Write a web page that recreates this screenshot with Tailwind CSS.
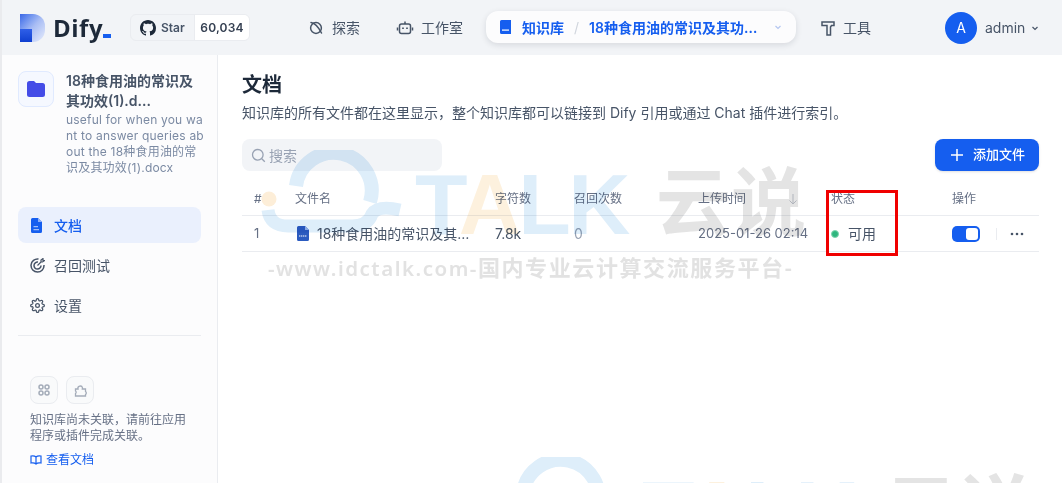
<!DOCTYPE html>
<html lang="zh-CN">
<head>
<meta charset="utf-8"/>
<title>Dify 文档</title>
<script src="https://cdn.jsdelivr.net/npm/@tailwindcss/browser@4"></script>
</head>
<body class="w-[1062px] h-[483px] overflow-hidden bg-white font-['Inter','Noto_Sans_CJK_SC',sans-serif] text-[#354052]">
<div class="relative w-full h-full flex flex-col border-l-2 border-[#eaebee]">

  <!-- top bar -->
  <header class="h-[55px] shrink-0 bg-[#f2f4f7] flex items-center relative">
    <div class="ml-[18px] w-[25px] h-[28px] rounded-r-[12px] bg-gradient-to-br from-[#3b66e6] via-[#a9bdf4] to-[#e8edfb] relative overflow-hidden">
      <div class="absolute left-0 bottom-0 w-[12px] h-[13px] bg-gradient-to-b from-[#2f5fe8] to-[#0f3fd0]"></div>
    </div>
    <span class="ml-[8px] w-[49px] text-[24px] leading-none font-bold tracking-[.5px] text-[#1d2939] font-['Open_Sans','Inter',sans-serif]">Dify</span>
    <span class="w-[8px] h-[4px] bg-[#155eef] self-end mb-[17px] ml-[1px]"></span>

    <div class="ml-[19px] h-[27px] w-[120px] flex rounded-md border border-[#eaecf0] overflow-hidden text-[12px] font-semibold">
      <div class="w-[63px] flex items-center gap-[5px] pl-[9px] text-[#475467]">
        <svg class="w-[16px] h-[16px] shrink-0" viewBox="0 0 16 16" fill="#1d2939"><path d="M8 0C3.58 0 0 3.58 0 8c0 3.54 2.29 6.53 5.47 7.59.4.07.55-.17.55-.38 0-.19-.01-.82-.01-1.49-2.01.37-2.53-.49-2.69-.94-.09-.23-.48-.94-.82-1.13-.28-.15-.68-.52-.01-.53.63-.01 1.08.58 1.23.82.72 1.21 1.87.87 2.33.66.07-.52.28-.87.51-1.07-1.78-.2-3.64-.89-3.64-3.95 0-.87.31-1.59.82-2.15-.08-.2-.36-1.02.08-2.12 0 0 .67-.21 2.2.82.64-.18 1.32-.27 2-.27s1.36.09 2 .27c1.53-1.04 2.2-.82 2.2-.82.44 1.1.16 1.92.08 2.12.51.56.82 1.27.82 2.15 0 3.07-1.87 3.75-3.65 3.95.29.25.54.73.54 1.48 0 1.07-.01 1.93-.01 2.2 0 .21.15.46.55.38A8.01 8.01 0 0 0 16 8c0-4.42-3.58-8-8-8z"/></svg>
        <span>Star</span>
      </div>
      <div class="flex-1 bg-white flex items-center justify-center border-l border-[#eaecf0] text-[#354052] tracking-[.2px]">60,034</div>
    </div>

    <nav class="absolute inset-y-0 left-[306px] flex items-center text-[14px] text-[#475467]">
      <div class="flex items-center gap-[8px] w-[88px]">
        <svg class="w-[16px] h-[16px]" viewBox="0 0 16 16" fill="none" stroke="#475467" stroke-width="1.5"><circle cx="8" cy="8" r="5.4"/><path d="M3 2.5c3 .5 7 3.500 10.500 10.500" stroke-linecap="round"/></svg>
        <span>探索</span>
      </div>
      <div class="flex items-center gap-[7px]">
        <svg class="w-[18px] h-[18px]" viewBox="0 0 18 18" fill="none" stroke="#475467" stroke-width="1.5"><rect x="3.500" y="5" width="11" height="9.500" rx="2"/><path d="M9 5V2.500M1.500 8.500v3M16.500 8.500v3"/><path d="M7 8.500v1.500M11 8.500v1.500" stroke-width="1.700"/></svg>
        <span>工作室</span>
      </div>
    </nav>

    <div class="absolute left-[484px] top-[11px] w-[310px] h-[32px] rounded-xl bg-[#fcfcfd] shadow-[0_2px_6px_rgba(16,24,40,0.12)] flex items-center pl-[14px] text-[14px] font-semibold text-[#155eef]">
      <svg class="w-[11px] h-[14px] shrink-0" viewBox="0 0 11 14"><path fill="#155eef" d="M1.500 0H11v14H1.500A1.500 1.500 0 0 1 0 12.500v-11A1.500 1.500 0 0 1 1.500 0z"/><rect x="2" y="9.500" width="7" height="1.200" fill="#fff"/></svg>
      <span class="ml-[11px]">知识库</span>
      <span class="mx-[10px] text-[#d0d5dd] font-normal">/</span>
      <span class="w-[170px] truncate">18种食用油的常识及其功效(1).docx</span>
      <svg class="ml-[14px] w-[10px] h-[10px]" viewBox="0 0 10 10" fill="none" stroke="#b4c6f0" stroke-width="1.200"><path d="M2.500 4l2.500 2.500L7.500 4"/></svg>
    </div>

    <div class="absolute left-[818px] inset-y-0 flex items-center gap-[7px] text-[14px] text-[#475467]">
      <svg class="w-[16px] h-[18px]" viewBox="0 0 16 18" fill="none" stroke="#475467" stroke-width="1.500"><path d="M2 3h12v3.500h-2.500l-1 1.500v8H7V6.500H2z"/></svg>
      <span>工具</span>
    </div>

    <div class="absolute left-[943px] inset-y-0 flex items-center">
      <div class="w-[32px] h-[32px] rounded-full bg-[#155eef] text-white text-[14px] flex items-center justify-center">A</div>
      <span class="ml-[8px] text-[14px] text-[#475467]">admin</span>
      <svg class="ml-[5px] w-[10px] h-[10px]" viewBox="0 0 10 10" fill="none" stroke="#475467" stroke-width="1.200"><path d="M2.500 4l2.500 2.500L7.500 4"/></svg>
    </div>
  </header>

  <div class="flex-1 flex min-h-0">
    <!-- sidebar -->
    <aside class="w-[216px] shrink-0 bg-[#fcfcfd] border-r border-[#eaecf0] flex flex-col pl-[16px] pr-[16px] pt-[16px]">
      <div class="flex gap-[12px]">
        <div class="w-[36px] h-[36px] shrink-0 rounded-lg bg-[#f5f8ff] border border-[#e0eaff] flex items-center justify-center">
          <svg class="w-[18px] h-[16px]" viewBox="0 0 18 16"><path fill="#444ce7" d="M2.500 0H7l2 2h6.500A2.500 2.500 0 0 1 18 4.500v9a2.500 2.500 0 0 1-2.500 2.500h-13A2.500 2.500 0 0 1 0 13.500v-11A2.500 2.500 0 0 1 2.500 0z"/></svg>
        </div>
        <div class="w-[136px]">
          <div class="text-[14px] leading-[20px] font-semibold text-[#475467]">18种食用油的常识及<br/>其功效(1).d...</div>
          <div class="mt-[1px] text-[12px] leading-[16px] tracking-[.2px] text-[#7b8aa3] whitespace-nowrap">useful for when you wa<br/>nt to answer queries ab<br/>out the 18种食用油的常<br/>识及其功效(1).docx</div>
        </div>
      </div>

      <nav class="mt-[31px] flex flex-col gap-[4px] text-[14px]">
        <div class="h-[36px] rounded-lg bg-[#eaf0fd] flex items-center pl-[12px] gap-[10px] text-[#155eef] font-medium">
          <svg class="w-[14px] h-[15px] shrink-0" viewBox="0 0 14 15"><path fill="#155eef" d="M2.500 0H8l4 4v9.500a1.500 1.500 0 0 1-1.500 1.500h-8A1.500 1.500 0 0 1 1 13.500v-12A1.500 1.500 0 0 1 2.500 0z"/><path fill="#fff" fill-opacity=".6" d="M3.500 8h4.500v1.300H3.500zM3.500 11h5.500v1.300H3.500z"/><path fill="#8fb0f8" d="M8 0l4 4H8z"/></svg>
          <span>文档</span>
        </div>
        <div class="h-[36px] flex items-center pl-[12px] gap-[9px] text-[#475467]">
          <svg class="w-[15px] h-[15px] shrink-0" viewBox="0 0 15 15" fill="none" stroke="#475467" stroke-width="1.500"><path d="M8.500 1.100A6.500 6.500 0 1 0 14 7"/><path d="M8 4.100A3.500 3.500 0 1 0 11 7.500"/><path d="M7.500 7.500L11 4M11 4V2l2-1.500V2.500h1.500L12.500 4z" stroke-width="1.200"/></svg>
          <span>召回测试</span>
        </div>
        <div class="h-[36px] flex items-center pl-[12px] gap-[9px] text-[#475467]">
          <svg class="w-[15px] h-[15px] shrink-0" viewBox="0 0 24 24" fill="none" stroke="#475467" stroke-width="2"><circle cx="12" cy="12" r="3"/><path d="M19.400 15a1.650 1.650 0 0 0 .33 1.820l.06.06a2 2 0 1 1-2.830 2.830l-.06-.06a1.650 1.650 0 0 0-2.820 1.170V21a2 2 0 1 1-4 0v-.09A1.650 1.650 0 0 0 7.260 19.740l-.06.06a2 2 0 1 1-2.830-2.830l.06-.06A1.650 1.650 0 0 0 3.260 14H3a2 2 0 1 1 0-4h.09A1.650 1.650 0 0 0 4.260 7.260l-.06-.06a2 2 0 1 1 2.830-2.830l.06.06A1.650 1.650 0 0 0 10 3.260V3a2 2 0 1 1 4 0v.09a1.650 1.650 0 0 0 2.820 1.170l.06-.06a2 2 0 1 1 2.830 2.830l-.06.06A1.650 1.650 0 0 0 20.740 10H21a2 2 0 1 1 0 4h-.09A1.650 1.650 0 0 0 19.400 15z"/></svg>
          <span>设置</span>
        </div>
      </nav>
      <div class="h-px bg-[#eaecf0] mt-[12px]"></div>

      <div class="mt-[40px] pl-[12px] pr-[4px]">
        <div class="flex gap-[8px]">
          <div class="w-[28px] h-[28px] rounded-lg bg-[#f9fafb] border border-[#eaecf0] flex items-center justify-center">
            <svg class="w-[12px] h-[12px]" viewBox="0 0 12 12" fill="none" stroke="#a4acb9" stroke-width="1.500"><circle cx="3" cy="3" r="2"/><circle cx="9" cy="3" r="2"/><circle cx="3" cy="9" r="2"/><circle cx="9" cy="9" r="2"/></svg>
          </div>
          <div class="w-[28px] h-[28px] rounded-lg bg-[#f9fafb] border border-[#eaecf0] flex items-center justify-center">
            <svg class="w-[13px] h-[13px]" viewBox="0 0 13 13" fill="none" stroke="#a4acb9" stroke-width="1.300"><path d="M1.500 5H4a2.300 2.300 0 0 1 4.500-1.200L8.300 5h3.200v2.500a1.800 1.800 0 0 1 0 3V12h-10V9.500a1.500 1.500 0 0 0 0-2.500z"/></svg>
          </div>
        </div>
        <p class="mt-[8px] text-[12px] leading-[16px] text-[#667085]">知识库尚未关联，请前往应用程序或插件完成关联。</p>
        <div class="mt-[8px] flex items-center gap-[4px] text-[12px] leading-[16px] text-[#155eef]">
          <svg class="w-[12px] h-[12px]" viewBox="0 0 12 12" fill="none" stroke="#155eef" stroke-width="1.200"><path d="M6 3C5 2 3 1.700 1 2v7c2-.3 4 0 5 1 1-1 3-1.300 5-1V2C9 1.700 7 2 6 3zM6 3v7"/></svg>
          <span>查看文档</span>
        </div>
      </div>
    </aside>

    <!-- documents -->
    <main class="flex-1 pl-[24px] pr-[23px] pt-[16px] min-w-0">
      <h1 class="text-[20px] leading-[28px] font-semibold text-[#1d2939]">文档</h1>
      <p class="mt-[4px] text-[14px] leading-[20px] text-[#475467]">知识库的所有文件都在这里显示，整个知识库都可以链接到 Dify 引用或通过 Chat 插件进行索引。</p>

      <div class="mt-[16px] flex justify-between">
        <div class="w-[200px] h-[32px] rounded-lg bg-[#f2f4f7] flex items-center pl-[9px] gap-[3px] text-[14px] text-[#98a2b3]">
          <svg class="w-[15px] h-[15px]" viewBox="0 0 15 15" fill="none" stroke="#98a2b3" stroke-width="1.300"><circle cx="6.800" cy="6.800" r="5.300"/><path d="M10.800 10.800l3 3"/></svg>
          <span>搜索</span>
        </div>
        <button class="w-[104px] h-[32px] rounded-lg bg-[#155eef] text-white text-[13px] font-medium flex items-center justify-center gap-[10px] pl-[2px] shadow-sm">
          <svg class="w-[12px] h-[12px]" viewBox="0 0 12 12" stroke="#fff" stroke-width="1.500"><path d="M6 0v12M0 6h12"/></svg>
          <span>添加文件</span>
        </button>
      </div>

      <div class="mt-[11px]">
        <div class="grid grid-cols-[41px_200px_79px_124px_133px_121px_99px] h-[34px] items-center border-b border-[#eaecf0] text-[12px] text-[#667085]">
          <span class="pl-[12px]">#</span>
          <span class="pl-[12px]">文件名</span>
          <span class="pl-[12px]">字符数</span>
          <span class="pl-[12px]">召回次数</span>
          <span class="pl-[12px] flex items-center justify-between pr-[21px]">上传时间
            <svg class="w-[10px] h-[12px]" viewBox="0 0 10 12" fill="none" stroke="#c5cad3" stroke-width="1"><path d="M5 1v10M1.500 7.500L5 11l3.500-3.500"/></svg>
          </span>
          <span class="pl-[12px]">状态</span>
          <span class="pl-[12px]">操作</span>
        </div>
        <div class="grid grid-cols-[41px_200px_79px_124px_133px_121px_99px] h-[36px] items-center border-b border-[#eaecf0] text-[14px] text-[#475467]">
          <span class="pl-[12px] text-[13px] text-[#667085]">1</span>
          <span class="pl-[14px] flex items-center gap-[8px] min-w-0">
            <svg class="w-[12px] h-[15px] shrink-0" viewBox="0 0 12 15"><path fill="#2b5bc0" d="M1.500 0H8l4 4v9.500a1.500 1.500 0 0 1-1.500 1.500h-9A1.500 1.500 0 0 1 0 13.500v-12A1.500 1.500 0 0 1 1.500 0z"/><path fill="#9db6ea" d="M8 0l4 4H8z"/><path stroke="#fff" stroke-width="1.200" stroke-dasharray="1.400 .6" d="M2 10h8"/></svg>
            <span class="truncate">18种食用油的常识及其功效(1).docx</span>
          </span>
          <span class="pl-[12px]">7.8k</span>
          <span class="pl-[12px] text-[#98a2b3]">0</span>
          <span class="pl-[12px] text-[13px] text-[#667085]">2025-01-26 02:14</span>
          <span class="pl-[12px] flex items-center gap-[9px]">
            <span class="w-[8px] h-[8px] rounded-full bg-[#2fb67f] border border-[#7fd6b0]"></span>
            <span>可用</span>
          </span>
          <span class="pl-[12px] flex items-center">
            <span class="w-[28px] h-[16px] rounded-[5px] bg-[#155eef] flex items-center justify-end pr-[2px]"><span class="w-[12px] h-[12px] rounded-[3px] bg-white"></span></span>
            <span class="w-px h-[12px] bg-[#eaecf0] ml-[16px]"></span>
            <svg class="ml-[13px] w-[14px] h-[4px]" viewBox="0 0 14 4" fill="#475467"><circle cx="2" cy="2" r="1.300"/><circle cx="7" cy="2" r="1.300"/><circle cx="12" cy="2" r="1.300"/></svg>
          </span>
        </div>
      </div>
    </main>
  </div>

  <!-- status highlight -->
  <div class="absolute left-[824px] top-[190px] w-[72px] h-[66px] border-[3px] border-[#f00000] pointer-events-none"></div>

  <!-- watermark -->
  <div class="absolute inset-0 overflow-hidden pointer-events-none mix-blend-multiply">
    <div class="absolute left-[258px] top-[150px] w-[560px] h-[135px]">
      <svg class="absolute left-0 top-0 w-[160px] h-[100px]" viewBox="0 0 160 100" fill="none">
        <path d="M36 36A38 38 0 1 1 110 52" stroke="#deeefa" stroke-width="14"/>
        <path d="M8 60Q10 76 28 76H92Q108 76 112 64Q118 55 140 60" stroke="#deeefa" stroke-width="13"/>
        <circle cx="9" cy="49" r="7.500" fill="#fdeed8"/>
      </svg>
      <span class="absolute left-[155px] top-[11px] text-[86px] leading-[86px] font-bold font-['Liberation_Sans',sans-serif] text-[#deeefa] tracking-[-2.500px]">T<span class="text-[#fdf1de]">A</span>LK</span>
      <span class="absolute left-[396px] top-[5px] text-[75px] leading-[85px] font-bold font-['Noto_Sans_CJK_SC',sans-serif] text-[#e4e4e4]">云说</span>
      <span class="absolute left-[8px] top-[103px] text-[22px] leading-[28px] font-semibold font-['Noto_Sans','Noto_Sans_CJK_SC',sans-serif] tracking-[1.600px] text-[#e2e2e2] whitespace-nowrap"><span class="text-[20.500px] tracking-[1.500px]">-www.idctalk.com-</span>国内专业云计算交流服务平台-</span>
    </div>
    <div class="absolute left-[485px] top-[457px] w-[560px] h-[135px]">
      <svg class="absolute left-0 top-0 w-[160px] h-[100px]" viewBox="0 0 160 100" fill="none">
        <path d="M36 36A38 38 0 1 1 110 52" stroke="#deeefa" stroke-width="14"/>
      </svg>
      <span class="absolute left-[155px] top-[11px] text-[86px] leading-[86px] font-bold font-['Liberation_Sans',sans-serif] text-[#deeefa] tracking-[-2.500px]">T<span class="text-[#fdf1de]">A</span>LK</span>
      <span class="absolute left-[396px] top-[5px] text-[75px] leading-[85px] font-bold font-['Noto_Sans_CJK_SC',sans-serif] text-[#e4e4e4]">云说</span>
    </div>
  </div>
</div>
</body>
</html>
